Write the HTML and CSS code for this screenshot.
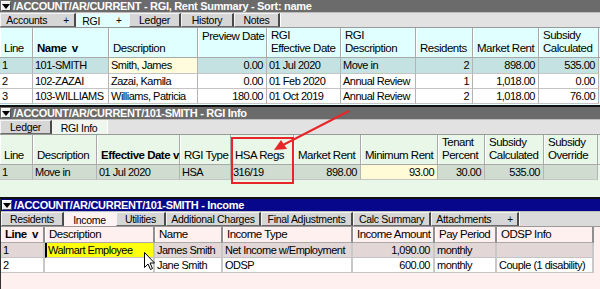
FILE: index.html
```html
<!DOCTYPE html>
<html>
<head>
<meta charset="utf-8">
<link rel="stylesheet" href="styles.css">
</head>
<body>
<div class="screen">
  <section class="pane pane-rgi">
    <div class="titlebar"><span class="drop"><svg width="8" height="8" viewBox="0 0 8 8"><path d="M0 2h8L4 7z" fill="#000"/></svg></span>/ACCOUNT/AR/CURRENT - RGI, Rent Summary - Sort: name</div>
    <div class="tabs">
      <div class="tab w76"><span>Accounts</span><span class="plus">+</span></div>
      <div class="tab active w53"><span>RGI</span><span class="plus">+</span></div>
      <div class="tab w52">Ledger</div>
      <div class="tab w53">History</div>
      <div class="tab w46">Notes</div>
      <div class="tab-rest"></div>
    </div>
    <div class="grid g1">
      <div class="hd">Line</div><div class="hd b">Name&nbsp;&nbsp;v</div><div class="hd">Description</div><div class="hd top">Preview Date</div><div class="hd">RGI<br>Effective Date</div><div class="hd">RGI<br>Description</div><div class="hd">Residents</div><div class="hd">Market Rent</div><div class="hd">Subsidy<br>Calculated</div><div class="hd end"></div>

      <div class="c sel">1</div><div class="c sel">101-SMITH</div><div class="c edit">Smith, James</div><div class="c sel r">0.00</div><div class="c sel">01 Jul 2020</div><div class="c sel">Move in</div><div class="c sel r">2</div><div class="c sel r">898.00</div><div class="c sel r">535.00</div><div class="c end"></div>

      <div class="c">2</div><div class="c">102-ZAZAI</div><div class="c">Zazai, Kamila</div><div class="c r">0.00</div><div class="c">01 Feb 2020</div><div class="c">Annual Review</div><div class="c r">1</div><div class="c r">1,018.00</div><div class="c r">0.00</div><div class="c end"></div>

      <div class="c">3</div><div class="c">103-WILLIAMS</div><div class="c">Williams, Patricia</div><div class="c r">180.00</div><div class="c">01 Oct 2019</div><div class="c">Annual Review</div><div class="c r">2</div><div class="c r">1,018.00</div><div class="c r">76.00</div><div class="c end"></div>
    </div>
    <div class="fill"></div>
  </section>

  <section class="pane pane-info">
    <div class="titlebar"><span class="drop"><svg width="8" height="8" viewBox="0 0 8 8"><path d="M0 2h8L4 7z" fill="#000"/></svg></span>/ACCOUNT/AR/CURRENT/101-SMITH - RGI Info</div>
    <div class="tabs">
      <div class="tab w52">Ledger</div>
      <div class="tab active w55">RGI Info</div>
      <div class="tab-rest"></div>
    </div>
    <div class="grid g2">
      <div class="hd">Line</div><div class="hd">Description</div><div class="hd b sort"><span>Effective Date</span><span>v</span></div><div class="hd">RGI Type</div><div class="hd">HSA Regs</div><div class="hd">Market Rent</div><div class="hd">Minimum Rent</div><div class="hd">Tenant<br>Percent</div><div class="hd">Subsidy<br>Calculated</div><div class="hd">Subsidy<br>Override</div><div class="hd end"></div>

      <div class="c sel">1</div><div class="c sel">Move in</div><div class="c sel">01 Jul 2020</div><div class="c sel">HSA</div><div class="c sel">316/19</div><div class="c sel r">898.00</div><div class="c edit r">93.00</div><div class="c sel r">30.00</div><div class="c sel r">535.00</div><div class="c sel"></div><div class="c end"></div>
    </div>
    <div class="fill"></div>
  </section>

  <section class="pane pane-income">
    <div class="titlebar"><span class="drop"><svg width="8" height="8" viewBox="0 0 8 8"><path d="M0 2h8L4 7z" fill="#000"/></svg></span>/ACCOUNT/AR/CURRENT/101-SMITH - Income</div>
    <div class="tabs">
      <div class="tab w63">Residents</div>
      <div class="tab active w52">Income</div>
      <div class="tab w50">Utilities</div>
      <div class="tab w95">Additional Charges</div>
      <div class="tab w92">Final Adjustments</div>
      <div class="tab w78">Calc Summary</div>
      <div class="tab w88"><span>Attachments</span><span class="plus">+</span></div>
      <div class="tab-rest"></div>
    </div>
    <div class="grid g3">
      <div class="hd b">Line&nbsp;&nbsp;v</div><div class="hd">Description</div><div class="hd">Name</div><div class="hd">Income Type</div><div class="hd">Income Amount</div><div class="hd">Pay Period</div><div class="hd">ODSP Info</div><div class="hd end"></div>

      <div class="c sel">1</div><div class="c hl">Walmart Employee</div><div class="c sel">James Smith</div><div class="c sel">Net Income w/Employment</div><div class="c sel r">1,090.00</div><div class="c sel">monthly</div><div class="c sel"></div><div class="c end"></div>

      <div class="c">2</div><div class="c"></div><div class="c">Jane Smith</div><div class="c">ODSP</div><div class="c r">600.00</div><div class="c">monthly</div><div class="c">Couple (1 disability)</div><div class="c end"></div>
    </div>
    <div class="fill"></div>
  </section>

  <div class="callout"></div>
  <svg class="arrow" width="600" height="289" viewBox="0 0 600 289">
    <line x1="349" y1="111" x2="283" y2="145" stroke="#e8262a" stroke-width="2"/>
    <path d="M274 150 L281 140 L287 149 Z" fill="#e8262a"/>
  </svg>
  <svg class="cursor" width="12" height="19" viewBox="0 0 12 19">
    <path d="M0.5 0.5 V15.5 L4 12 L6.5 17.5 L8.5 16.5 L6 11 H10.5 Z" fill="#fff" stroke="#000" stroke-width="1"/>
  </svg>
</div>
</body>
</html>
```
FILE: styles.css
```css
* { box-sizing: border-box; }
html, body { margin: 0; padding: 0; }
body {
  width: 600px;
  height: 289px;
  overflow: hidden;
  background: #fff;
  font-family: "Liberation Sans", Arial, sans-serif;
  font-size: 11px;
  letter-spacing: -0.5px;
  color: #000;
}
.screen {
  position: relative;
  width: 600px;
  height: 289px;
  display: flex;
  flex-direction: column;
}
.pane { display: flex; flex-direction: column; }

.titlebar {
  height: 13px;
  line-height: 12px;
  background: #6b6b6b;
  color: #fff;
  font-weight: bold;
  font-size: 11px;
  letter-spacing: -0.3px;
  display: flex;
  align-items: center;
  white-space: nowrap;
  border-bottom: 1px solid #bdbdbd;
}
.pane-income .titlebar { background: #06078a; }
.drop {
  width: 10px;
  height: 10px;
  margin: 0 2px 0 1px;
  background: #f0f0f0;
  border: 1px solid #fff;
  border-right-color: #555;
  border-bottom-color: #555;
  display: flex;
  align-items: center;
  justify-content: center;
}

.tabs {
  height: 15px;
  display: flex;
  font-size: 10.5px;
  letter-spacing: -0.3px;
  background: #e2e2e2;
  border-bottom: 1px solid #9a9a9a;
}
.tab {
  flex: none;
  height: 14px;
  display: flex;
  align-items: center;
  justify-content: center;
  gap: 16px;
  background: #d6d6d6;
  border: 1px solid #f4f4f4;
  border-right: 2px solid #4a4a4a;
  border-bottom: 1px solid #6a6a6a;
  white-space: nowrap;
}
.tab .plus { font-size: 10px; }
.tab-rest { flex: 1; background: #e2e2e2; border-left: 1px solid #fff; }
.pane-rgi .tab.active { background: #e2ffff; border-right-color: #e2ffff; border-bottom: none; }
.pane-info .tab.active { background: #eef6ee; border-right-color: #eef6ee; border-bottom: none; }
.pane-income .tab.active { background: #fff2f2; border-right-color: #fff2f2; border-bottom: none; }
.pane-income .tab-rest { background: #dadada; }
.w46 { width: 46px; } .w50 { width: 50px; } .w52 { width: 52px; } .w53 { width: 53px; }
.w55 { width: 55px; } .w63 { width: 63px; } .w76 { width: 76px; } .w78 { width: 78px; }
.w88 { width: 88px; } .w92 { width: 92px; } .w95 { width: 95px; }

.grid { display: grid; }
.g1 {
  grid-template-columns: 33px 76px 89px 69px 74px 75px 57px 66px 60px 1fr;
  grid-template-rows: 30px 16px 15px 15px;
  background: #e0ffff;
}
.g2 {
  grid-template-columns: 33px 64px 83px 51px 63px 67px 77px 47px 59px 54px 1fr;
  grid-template-rows: 30px 15px;
  background: #e9f7e9;
}
.g3 {
  grid-template-columns: 44px 110px 68px 130px 82px 62px 97px 1fr;
  grid-template-rows: 16px 15px 15px;
  background: #fff0f0;
}

.hd {
  display: flex;
  flex-direction: column;
  justify-content: flex-end;
  padding: 0 3px 2px 4px;
  line-height: 13px;
  font-size: 11.5px;
  white-space: nowrap;
  border-right: 1px solid #a9a9a9;
  box-shadow: inset 1px 0 #fff;
  border-bottom: 1px solid #a9a9a9;
}
.g1 .hd { background: #e0ffff; }
.g2 .hd { background: #e9f7e9; }
.g3 .hd { background: #fff0f0; padding-bottom: 1px; border-right: 2px solid #8f8f8f; }
.hd.top { justify-content: flex-start; padding-top: 2px; }
.hd.b { font-weight: bold; }
.hd.sort { flex-direction: row; justify-content: space-between; align-items: flex-end; padding-right: 2px; gap: 3px; }
.hd.end { border-right: none; box-shadow: none; }
.g3 .hd.end { border: none; }

.c {
  padding: 0 3px 0 2px;
  line-height: 14px;
  white-space: nowrap;
  overflow: hidden;
  background: #fff;
  border-right: 1px solid #b4b4b4;
  border-bottom: 1px solid #c4c4c4;
  font-size: 11px;
}
.c.r { text-align: right; }
.c.end { background: transparent; border: none; }
.g1 .c.sel { background: #c4e2e2; }
.g1 .c.edit { background: #fffbdc; }
.g2 .c.sel { background: #cfdccf; }
.g2 .c.edit { background: #fffbd6; }
.g3 .c.sel { background: #e3d6d6; }
.g3 .c.hl { background: #ffff10; border-left: 2px solid #000; padding-left: 1px; }
.g3 .c { border-right: 2px solid #c8c8c8; }
.g3 .c.end { border: none; }

.pane-rgi .fill { height: 3px; background: #e8ffff; border-bottom: 2px solid #111; }
.pane-info .fill { height: 19px; background: #e9f7e9; border-bottom: 2px solid #111; }
.pane-income .fill { flex: 1; background: #fff0f0; }
.pane-income { flex: 1; border-left: 1px solid #333; }

.callout {
  position: absolute;
  left: 231px;
  top: 137px;
  width: 63px;
  height: 47px;
  border: 2px solid #e8262a;
}
.arrow { position: absolute; left: 0; top: 0; }
.cursor { position: absolute; left: 144px; top: 252px; }
```
